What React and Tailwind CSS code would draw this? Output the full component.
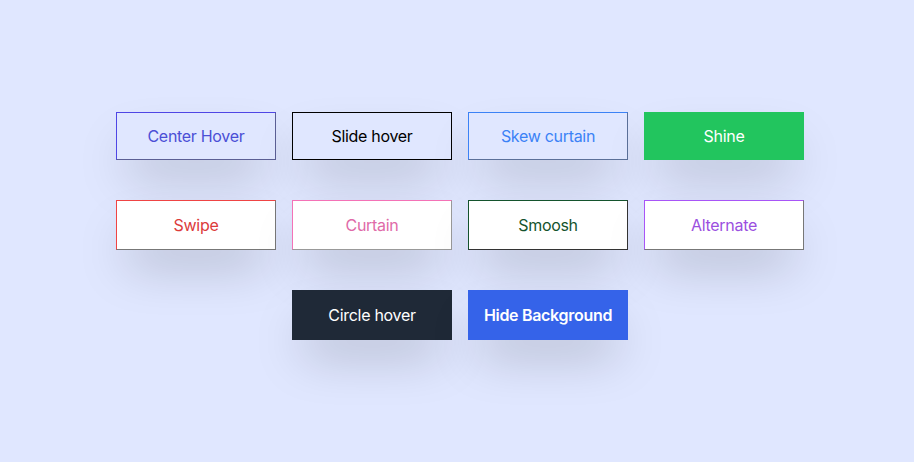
export default function App() {
  const font = { fontFamily: 'Inter, "Noto Sans", sans-serif' };
  return (
    <div className="min-h-[462px] w-full bg-[#e0e7ff] pt-[112px] pl-[116px] tracking-[-0.3px]" style={font}>
      <div className="grid grid-cols-[160px_160px_160px_160px] gap-x-4 gap-y-10">
        <button className="h-12 border border-[#4f46e5] border-r-[#5b5f95] border-b-[#5b5f95] bg-[#e0e7ff] text-base text-[#4b4fd6] shadow-2xl">
          Center Hover
        </button>
        <button className="h-12 border border-black bg-[#e0e7ff] text-base text-black shadow-2xl">
          Slide hover
        </button>
        <button className="h-12 border border-[#3b82f6] border-r-[#5b7099] border-b-[#5b7099] bg-[#e0e7ff] text-base text-[#3b82f6] shadow-2xl">
          Skew curtain
        </button>
        <button className="h-12 bg-[#22c55e] text-base text-white shadow-2xl">
          Shine
        </button>

        <button className="h-[50px] border border-[#ef4444] border-r-[#777] border-b-[#777] bg-white text-base text-[#dc3b3b] shadow-2xl">
          Swipe
        </button>
        <button className="h-[50px] border border-[#f472b6] border-r-[#999] border-b-[#999] bg-white text-base text-[#e06aa8] shadow-2xl">
          Curtain
        </button>
        <button className="h-[50px] border border-[#14532d] border-r-[#333] border-b-[#333] bg-white text-base text-[#14532d] shadow-2xl">
          Smoosh
        </button>
        <button className="h-[50px] border border-[#a855f7] border-r-[#777] border-b-[#777] bg-white text-base text-[#9b4fe0] shadow-2xl">
          Alternate
        </button>

        <div />
        <button className="h-[50px] bg-[#1f2937] text-base font-normal text-white shadow-2xl">
          Circle hover
        </button>
        <button className="h-[50px] bg-[#3563e9] text-base font-semibold text-white shadow-2xl">
          Hide Background
        </button>
      </div>
    </div>
  );
}
